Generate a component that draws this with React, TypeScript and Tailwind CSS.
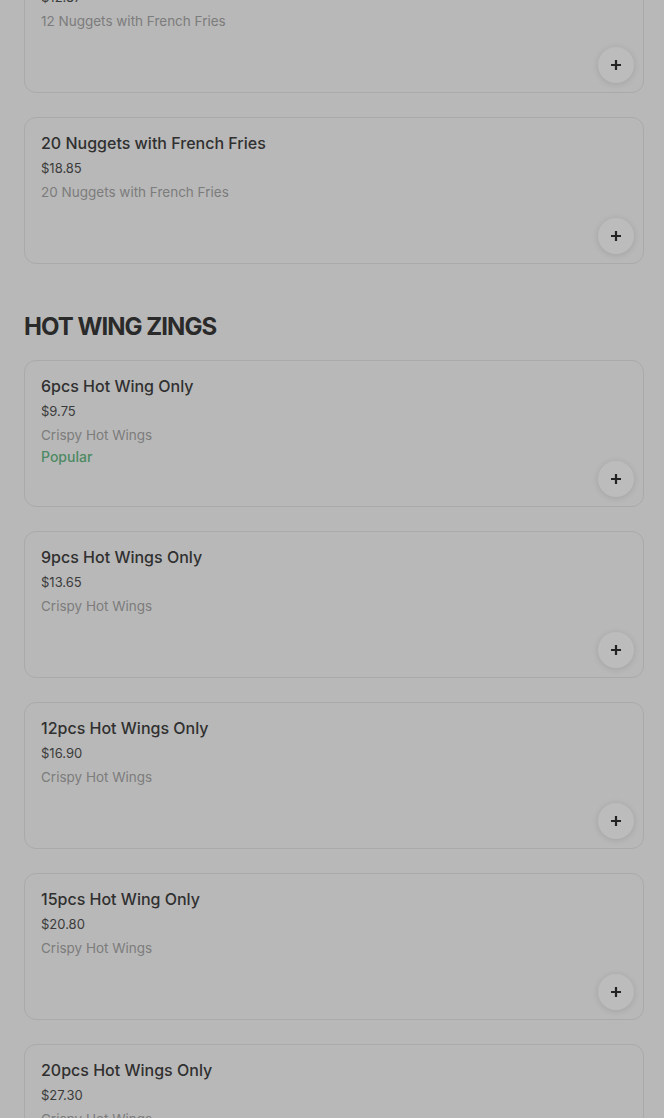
import React from "react";

type Item = { name: string; price: string; desc: string; popular?: boolean };

const first: Item[] = [
  { name: "12 Nuggets with French Fries", price: "$12.87", desc: "12 Nuggets with French Fries" },
  { name: "20 Nuggets with French Fries", price: "$18.85", desc: "20 Nuggets with French Fries" },
];

const wings: Item[] = [
  { name: "6pcs Hot Wing Only", price: "$9.75", desc: "Crispy Hot Wings", popular: true },
  { name: "9pcs Hot Wings Only", price: "$13.65", desc: "Crispy Hot Wings" },
  { name: "12pcs Hot Wings Only", price: "$16.90", desc: "Crispy Hot Wings" },
  { name: "15pcs Hot Wing Only", price: "$20.80", desc: "Crispy Hot Wings" },
  { name: "20pcs Hot Wings Only", price: "$27.30", desc: "Crispy Hot Wings" },
];

function Card({ item }: { item: Item }) {
  return (
    <div className="relative h-[147px] rounded-[12px] border border-[#aaaaaa] px-4 pt-[14px]">
      <div className="text-[16px] leading-[22px] font-medium text-[#303030]">{item.name}</div>
      <div className="mt-[4px] text-[13px] leading-[20px] text-[#3b3b3b]">{item.price}</div>
      <div className="mt-[4px] text-[13.5px] leading-[20px] text-[#7c7c7c]">{item.desc}</div>
      {item.popular && (
        <div className="mt-[2px] text-[14px] leading-[20px] font-medium text-[#4d8a63]">Popular</div>
      )}
      <button className="absolute right-[9px] bottom-[9px] flex h-[36px] w-[36px] items-center justify-center rounded-full bg-[#bcbcbc] shadow-[0_1px_6px_rgba(0,0,0,0.12)]">
        <svg width="12" height="12" viewBox="0 0 12 12">
          <path d="M6 1v10M1 6h10" stroke="#232323" strokeWidth="2.2" strokeLinecap="butt" />
        </svg>
      </button>
    </div>
  );
}

export default function App() {
  return (
    <div
      className="h-[1118px] overflow-hidden bg-[#b8b8b8] pl-6 pr-5"
      style={{ fontFamily: "Inter, 'Noto Sans', sans-serif" }}
    >
      <div className="-mt-[54px] flex flex-col gap-6">
        {first.map((i) => (
          <Card key={i.name} item={i} />
        ))}
      </div>
      <h2 className="mt-[47px] mb-[17px] text-[24px] leading-[32px] font-bold tracking-[-0.04em] text-[#2a2a2a]">
        HOT WING ZINGS
      </h2>
      <div className="flex flex-col gap-6">
        {wings.map((i) => (
          <Card key={i.name} item={i} />
        ))}
      </div>
    </div>
  );
}
